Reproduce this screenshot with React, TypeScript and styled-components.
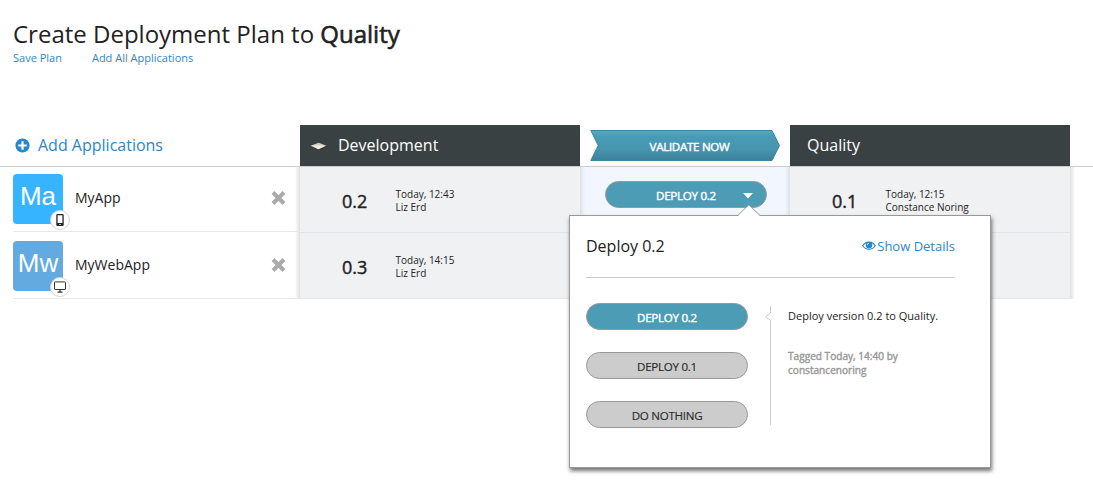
import React from "react";
import styled, { createGlobalStyle } from "styled-components";

const GlobalStyle = createGlobalStyle`
  *, *::before, *::after { box-sizing: border-box; }
  body {
    margin: 0;
    background: #fff;
    color: #222;
    font-family: "Open Sans", "Noto Sans", sans-serif;
    overflow: hidden;
  }
`;

const Page = styled.main`
  width: 1093px;
  height: 503px;
  display: flex;
  flex-direction: column;
  overflow: hidden;
`;

const PageHeader = styled.header`
  height: 125px;
  padding: 18px 13px 0;
`;

const Title = styled.h1`
  margin: 0;
  font-size: 24px;
  font-weight: 400;
  line-height: 32px;
  white-space: nowrap;
`;

const TitleTarget = styled.span`
  -webkit-text-stroke: 0.6px #222;
`;

const HeaderLinks = styled.nav`
  display: flex;
  gap: 30px;
`;

const HeaderLink = styled.a`
  color: #2d87c9;
  font-size: 11px;
  line-height: 16px;
`;

const HeadRow = styled.div`
  display: grid;
  grid-template-columns: 300px 280px 210px 280px;
  height: 42px;
  border-bottom: 1px solid #ccc;
`;

const AddApplications = styled.a`
  display: flex;
  align-items: center;
  gap: 8px;
  padding-left: 15px;
  color: #2d87c9;
  font-size: 16px;
  line-height: 41px;
`;

const StageHead = styled.div<{ $indent: number }>`
  display: flex;
  align-items: center;
  gap: 11px;
  padding-left: ${(p) => p.$indent}px;
  background: #3a4142;
  color: #fff;
  font-size: 16px;
  line-height: 41px;
`;

const ValidateButton = styled.div`
  position: relative;
  width: 190px;
  height: 31px;
  margin: 5px 10px;
  color: #fff;
  font-size: 11.6px;
  line-height: 33px;
  padding-left: 9px;
  text-align: center;
  letter-spacing: -0.3px;
  -webkit-text-stroke: 0.4px #fff;
`;

const Ribbon = styled.svg`
  position: absolute;
  left: 0;
  top: 0;
`;

const Label = styled.span`
  position: relative;
`;

const Board = styled.div`
  display: grid;
  grid-template-columns: 300px 280px 210px 280px 5px;
  height: 132px;
`;

const AppList = styled.div`
  padding-left: 13px;
  background: linear-gradient(to left, #dfdfe0, #fff 5px);
`;

const AppRow = styled.div<{ $height: number; $top: number }>`
  display: flex;
  height: ${(p) => p.$height}px;
  padding: ${(p) => p.$top}px 14px 0 0;
  border-bottom: 1px solid #e6e8e9;
`;

const AppTile = styled.div<{ $color: string }>`
  position: relative;
  width: 50px;
  height: 50px;
  border-radius: 4px;
  background: ${(p) => p.$color};
  color: #fff;
  font-family: "Liberation Sans", Arial, sans-serif;
  font-size: 26px;
  line-height: 45px;
  text-align: center;
`;

const PlatformBadge = styled.span`
  position: absolute;
  left: 37px;
  top: 36px;
  display: flex;
  align-items: center;
  justify-content: center;
  width: 20px;
  height: 20px;
  border: 1px solid #d6d6d6;
  border-radius: 50%;
  background: #fff;
`;

const AppName = styled.span`
  flex: 1;
  padding-left: 12px;
  font-size: 14px;
  line-height: 48px;
`;

const RemoveIcon = styled.svg`
  margin-top: 16px;
`;

const StageColumn = styled.div`
  background: #f0f1f3;
`;

const VersionCell = styled.div`
  display: flex;
  align-items: center;
  height: 66px;
  padding: 2px 0 0 42px;
  border-bottom: 1px solid #e3e6e8;
`;

const Version = styled.span`
  width: 53.5px;
  font-size: 18px;
  line-height: 24px;
  padding-top: 1px;
  -webkit-text-stroke: 0.4px #222;
`;

const Stamp = styled.span`
  font-size: 10px;
  line-height: 13px;
  white-space: pre-line;
`;

const ActionColumn = styled.div`
  padding: 14px 25px 0;
  background:
    linear-gradient(to right, #dde1e8, rgba(242, 247, 255, 0) 5px),
    linear-gradient(to left, #dde1e8, rgba(242, 247, 255, 0) 5px),
    #f2f7ff;
`;

const ActionAnchor = styled.div`
  position: relative;
`;

const Pill = styled.div<{ $primary?: boolean }>`
  display: flex;
  align-items: center;
  justify-content: center;
  width: 162px;
  height: 27px;
  padding-top: 1px;
  border: 1px solid #999;
  border-radius: 14px;
  background: ${(p) => (p.$primary ? "#4b9cb4" : "#ccc")};
  color: ${(p) => (p.$primary ? "#fff" : "#2a2a2a")};
  font-size: 11.6px;
  letter-spacing: -0.28px;
  -webkit-text-stroke: ${(p) => (p.$primary ? "0.4px #fff" : "0.15px #2a2a2a")};
`;

const Caret = styled.svg`
  position: absolute;
  left: 138px;
  top: 12px;
`;

const EdgeShadow = styled.div`
  background: linear-gradient(to right, #dfdfe0, #fff 5px);
`;

const Popover = styled.section`
  position: absolute;
  left: -36px;
  top: 34px;
  z-index: 2;
  width: 422px;
  height: 253px;
  padding: 0 35px 0 16px;
  border: 1px solid #999;
  background: #fff;
  box-shadow: 1px 3px 4px rgba(0, 0, 0, 0.55);
`;

const PopoverTip = styled.svg`
  position: absolute;
  left: 167px;
  top: -12px;
`;

const PopoverHead = styled.div`
  display: flex;
  align-items: center;
  justify-content: space-between;
  height: 62px;
  padding-bottom: 2px;
  border-bottom: 1px solid #ccc;
  font-size: 16px;
`;

const DetailsLink = styled.a`
  display: flex;
  align-items: center;
  gap: 1px;
  color: #2d87c9;
  font-size: 13px;
`;

const PopoverBody = styled.div`
  display: flex;
  padding-top: 25px;
`;

const Options = styled.div`
  display: flex;
  flex-direction: column;
  gap: 22px;
`;

const Bracket = styled.svg`
  margin: 3px 0 0 17px;
`;

const Details = styled.div`
  padding-left: 17px;
  font-size: 11px;
  line-height: 14px;
`;

const Summary = styled.p`
  margin: 6px 0 26px;
  white-space: nowrap;
`;

const Tagged = styled.p`
  margin: 0;
  color: #999;
  font-size: 10.1px;
  white-space: pre-line;
  -webkit-text-stroke: 0.4px #999;
`;

const PlusIcon = () => (
  <svg width="15" height="15" viewBox="0 0 15 15">
    <circle cx="7.5" cy="7.5" r="7.1" fill="#2488cc" />
    <path d="M7.5 3.2v8.6M3.2 7.5h8.6" stroke="#fff" strokeWidth="2.2" />
  </svg>
);

const StageIcon = () => (
  <svg width="17" height="8" viewBox="0 0 17 8">
    <path d="M1.5 4.8 9.5 8 17 4.5 9 2z" fill="#222" opacity=".5" />
    <path d="M0.5 3.8 8.6 0.8 16.4 3.8 8.6 7.2z" fill="#d2d0c4" />
    <path d="M2 3.8 8.3 3.4 15 3.8 8.3 7.2z" fill="#efeee6" />
  </svg>
);

const PhoneIcon = () => (
  <svg width="8" height="12" viewBox="0 0 8 12">
    <path
      fill="#222"
      fillRule="evenodd"
      d="M1.5 0h5A1.2 1.2 0 0 1 7.7 1.2v9.6A1.2 1.2 0 0 1 6.5 12h-5A1.2 1.2 0 0 1 .3 10.8V1.2A1.2 1.2 0 0 1 1.5 0zM1.6 1.3v7.7h4.8V1.3zM3.3 10v1h1.4v-1z"
    />
  </svg>
);

const DesktopIcon = () => (
  <svg width="12" height="12" viewBox="0 0 12 12">
    <rect x=".5" y=".9" width="11" height="7.6" rx=".6" fill="none" stroke="#333" />
    <path d="M6 9v2M3.5 11.2h5" stroke="#333" strokeWidth="1.2" />
  </svg>
);

const EyeIcon = () => (
  <svg width="14" height="14" viewBox="0 0 14 14">
    <path
      d="M.7 6.7C3.7 1.9 10.3 1.9 13.3 6.7C10.3 11.3 3.7 11.3.7 6.7z"
      fill="none"
      stroke="#2488cc"
      strokeWidth="1.1"
    />
    <circle cx="7" cy="6" r="3.3" fill="#2488cc" />
    <path d="M5.2 6A1.9 1.9 0 0 1 7 4.2" fill="none" stroke="#fff" strokeWidth=".8" />
  </svg>
);

const apps = [
  { name: "MyApp", initials: "Ma", color: "#37b4ff", height: 65, top: 7, icon: <PhoneIcon /> },
  { name: "MyWebApp", initials: "Mw", color: "#62aae0", height: 67, top: 9, icon: <DesktopIcon /> },
];

export default function App() {
  return (
    <Page>
      <GlobalStyle />
      <PageHeader>
        <Title>
          Create Deployment Plan to <TitleTarget>Quality</TitleTarget>
        </Title>
        <HeaderLinks>
          <HeaderLink>Save Plan</HeaderLink>
          <HeaderLink>Add All Applications</HeaderLink>
        </HeaderLinks>
      </PageHeader>

      <HeadRow>
        <AddApplications>
          <PlusIcon />
          Add Applications
        </AddApplications>
        <StageHead $indent={10}>
          <StageIcon />
          Development
        </StageHead>
        <ValidateButton>
          <Ribbon width="190" height="31" viewBox="0 0 190 31">
            <defs>
              <linearGradient id="ribbon" x1="0" y1="0" x2="0" y2="1">
                <stop offset="0" stopColor="#50abc8" />
                <stop offset=".2" stopColor="#489bb6" />
                <stop offset=".6" stopColor="#4796b0" />
                <stop offset="1" stopColor="#3d809a" />
              </linearGradient>
            </defs>
            <path
              d="M.8.5H182L189.5 15.5 182 30.5H.8L8.2 15.5z"
              fill="url(#ribbon)"
              stroke="#3b86a0"
            />
          </Ribbon>
          <Label>VALIDATE NOW</Label>
        </ValidateButton>
        <StageHead $indent={17}>Quality</StageHead>
      </HeadRow>

      <Board>
        <AppList>
          {apps.map((app) => (
            <AppRow key={app.name} $height={app.height} $top={app.top}>
              <AppTile $color={app.color}>
                {app.initials}
                <PlatformBadge>{app.icon}</PlatformBadge>
              </AppTile>
              <AppName>{app.name}</AppName>
              <RemoveIcon width="15" height="16" viewBox="0 0 15 16">
                <path d="M2 2.5 13 13.5M13 2.5 2 13.5" stroke="#aaa" strokeWidth="4" />
              </RemoveIcon>
            </AppRow>
          ))}
        </AppList>
        <StageColumn>
          <VersionCell>
            <Version>0.2</Version>
            <Stamp>{"Today, 12:43\nLiz Erd"}</Stamp>
          </VersionCell>
          <VersionCell>
            <Version>0.3</Version>
            <Stamp>{"Today, 14:15\nLiz Erd"}</Stamp>
          </VersionCell>
        </StageColumn>
        <ActionColumn>
          <ActionAnchor>
            <Pill $primary>DEPLOY 0.2</Pill>
            <Caret width="10" height="6" viewBox="0 0 10 6">
              <path d="M0 0h10L5 5.5z" fill="#fff" />
            </Caret>
            <Popover>
              <PopoverTip width="24" height="13" viewBox="0 0 24 13">
                <path d="M0 13 12 .8 24 13z" fill="#fff" />
                <path d="M.5 11.7 11.8.8 23.3 11.7" fill="none" stroke="#999" />
              </PopoverTip>
              <PopoverHead>
                <span>Deploy 0.2</span>
                <DetailsLink>
                  <EyeIcon />
                  Show Details
                </DetailsLink>
              </PopoverHead>
              <PopoverBody>
                <Options>
                  <Pill $primary>DEPLOY 0.2</Pill>
                  <Pill>DEPLOY 0.1</Pill>
                  <Pill>DO NOTHING</Pill>
                </Options>
                <Bracket width="6" height="119" viewBox="0 0 6 119">
                  <path d="M5.5 0V7L.7 10.8 5.5 14.5V119" fill="none" stroke="#ccc" />
                </Bracket>
                <Details>
                  <Summary>Deploy version 0.2 to Quality.</Summary>
                  <Tagged>{"Tagged Today, 14:40 by\nconstancenoring"}</Tagged>
                </Details>
              </PopoverBody>
            </Popover>
          </ActionAnchor>
        </ActionColumn>
        <StageColumn>
          <VersionCell>
            <Version>0.1</Version>
            <Stamp>{"Today, 12:15\nConstance Noring"}</Stamp>
          </VersionCell>
          <VersionCell />
        </StageColumn>
        <EdgeShadow />
      </Board>
    </Page>
  );
}
